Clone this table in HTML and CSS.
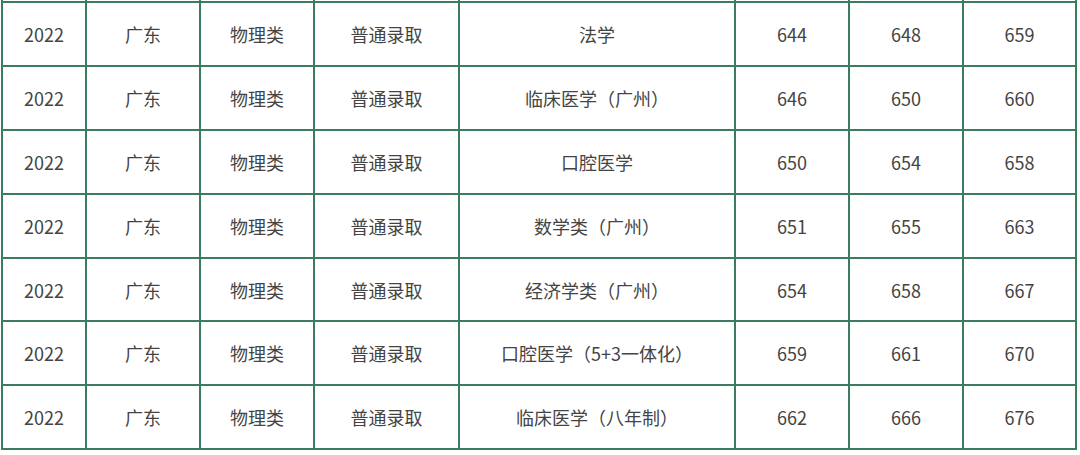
FILE: index.html
```html
<!DOCTYPE html>
<html lang="zh-CN">
<head>
<meta charset="utf-8">
<link rel="stylesheet" href="styles.css">
</head>
<body>
<div class="wrap">
<table class="scores">
  <colgroup>
    <col class="c-year"><col class="c-prov"><col class="c-type"><col class="c-batch"><col class="c-major"><col class="c-n1"><col class="c-n2"><col class="c-n3">
  </colgroup>
  <tbody>
    <tr class="stub"><td></td><td></td><td></td><td></td><td></td><td></td><td></td><td></td></tr>
    <tr><td>2022</td><td>广东</td><td>物理类</td><td>普通录取</td><td>法学</td><td>644</td><td>648</td><td>659</td></tr>
    <tr><td>2022</td><td>广东</td><td>物理类</td><td>普通录取</td><td>临床医学（广州）</td><td>646</td><td>650</td><td>660</td></tr>
    <tr><td>2022</td><td>广东</td><td>物理类</td><td>普通录取</td><td>口腔医学</td><td>650</td><td>654</td><td>658</td></tr>
    <tr><td>2022</td><td>广东</td><td>物理类</td><td>普通录取</td><td>数学类（广州）</td><td>651</td><td>655</td><td>663</td></tr>
    <tr><td>2022</td><td>广东</td><td>物理类</td><td>普通录取</td><td>经济学类（广州）</td><td>654</td><td>658</td><td>667</td></tr>
    <tr><td>2022</td><td>广东</td><td>物理类</td><td>普通录取</td><td>口腔医学（5+3一体化）</td><td>659</td><td>661</td><td>670</td></tr>
    <tr><td>2022</td><td>广东</td><td>物理类</td><td>普通录取</td><td>临床医学（八年制）</td><td>662</td><td>666</td><td>676</td></tr>
  </tbody>
</table>
</div>
</body>
</html>
```
FILE: styles.css
```css
html, body {
  margin: 0;
  padding: 0;
  background: #ffffff;
}

.wrap {
  padding-left: 1px;
  width: 1080px;
  height: 455px;
  overflow: hidden;
  box-sizing: border-box;
}

.scores {
  border-collapse: collapse;
  table-layout: fixed;
  width: 1074px;
  font-family: "Noto Sans CJK SC", "Noto Sans", sans-serif;
  font-size: 18px;
  color: #444444;
}

.c-year { width: 84px; }
.c-prov { width: 114px; }
.c-type { width: 114px; }
.c-batch { width: 145px; }
.c-major { width: 276px; }
.c-n1 { width: 114px; }
.c-n2 { width: 114px; }
.c-n3 { width: 113px; }

.scores td {
  border: 2px solid #3b7c5e;
  text-align: center;
  vertical-align: middle;
  padding: 0;
  height: 61.9px;
  line-height: 24px;
  white-space: nowrap;
}

.scores tr.stub td {
  height: 1px;
  border-top: none;
}
```
